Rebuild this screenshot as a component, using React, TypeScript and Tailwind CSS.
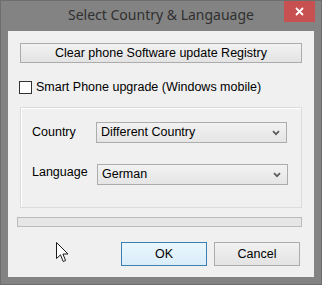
import React from 'react'

const Chevron = () => (
  <svg className="w-[8px] h-[6px]" viewBox="0 0 8 6" fill="none">
    <path d="M1 1.2L4 4.2L7 1.2" stroke="#5a5a5a" strokeWidth="1.7" />
  </svg>
)

const Cursor = () => (
  <svg className="absolute left-[55px] top-[241px] w-[13px] h-[21px]" viewBox="0 0 13 21">
    <path
      d="M0.5 0.5V16.5L4.5 12.8L7.2 19.5L9.6 18.5L6.9 12H12L0.5 0.5Z"
      fill="#ffffff"
      stroke="#1a1a1a"
      strokeWidth="1"
      strokeLinejoin="round"
    />
  </svg>
)

const Select = ({ value, className }: { value: string; className?: string }) => (
  <div
    className={`flex items-center justify-between h-[21px] pl-[4px] pr-[6px] border border-[#acacac] bg-gradient-to-b from-[#f2f2f2] to-[#e5e5e5] text-[#000] ${className ?? ''}`}
  >
    <span>{value}</span>
    <Chevron />
  </div>
)

export default function App() {
  return (
    <div className="relative w-[322px] h-[285px] bg-[#838383] border border-[#6e6e6e] flex flex-col font-['Liberation_Sans',Arial,sans-serif] text-[12.5px] text-[#1a1a1a]">
      {/* Title bar */}
      <div className="h-[30px] flex items-center justify-center">
        <span className="font-['Noto_Sans',sans-serif] text-[14px] text-[#303030] -mt-[3px]">
          Select Country &amp; Langauage
        </span>
      </div>
      <div className="absolute top-0 right-[6px] w-[31px] h-[21px] bg-[#c75050] flex items-center justify-center">
        <svg className="w-[9px] h-[9px]" viewBox="0 0 9 9">
          <path d="M1 1L8 8M8 1L1 8" stroke="#ffffff" strokeWidth="1.8" />
        </svg>
      </div>

      {/* Client area */}
      <div className="mx-[7px] h-[246px] bg-[#f0f0f0] px-[12px] pt-[12px] flex flex-col">
        <button className="h-[20px] w-full border border-[#acacac] bg-gradient-to-b from-[#f2f2f2] to-[#e3e3e3] text-[#000]">
          Clear phone Software update Registry
        </button>

        <label className="flex items-center gap-[4px] mt-[18px] -ml-[1px] h-[13px]">
          <span className="w-[13px] h-[13px] border border-[#333333] bg-white" />
          <span className="text-[#000]">Smart Phone upgrade (Windows mobile)</span>
        </label>

        <div className="mt-[13px] h-[101px] border border-[#dcdcdc] shadow-[inset_1px_1px_0_#ffffff] pl-[11px] pr-[14px] pt-[14px] flex flex-col gap-[21px]">
          <div className="flex items-center">
            <span className="w-[64px] text-[#000]">Country</span>
            <Select value="Different Country" className="flex-1" />
          </div>
          <div className="flex items-center">
            <span className="w-[64px] text-[#000] -mt-[4px]">Language</span>
            <Select value="German" className="flex-1 ml-[1px] -mr-[1px]" />
          </div>
        </div>

        <div className="mt-[9px] -ml-[3px] h-[10px] border border-[#bcbcbc] bg-[#e6e6e6]" />

        <div className="mt-[15px] flex justify-end gap-[7px] pr-[2px]">
          <button className="w-[86px] h-[24px] border border-[#3c7fb1] bg-gradient-to-b from-[#eaf6fd] to-[#d9edf9] text-[#000]">
            OK
          </button>
          <button className="w-[86px] h-[24px] border border-[#acacac] bg-gradient-to-b from-[#f2f2f2] to-[#e3e3e3] text-[#000]">
            Cancel
          </button>
        </div>
      </div>

      <Cursor />
    </div>
  )
}
